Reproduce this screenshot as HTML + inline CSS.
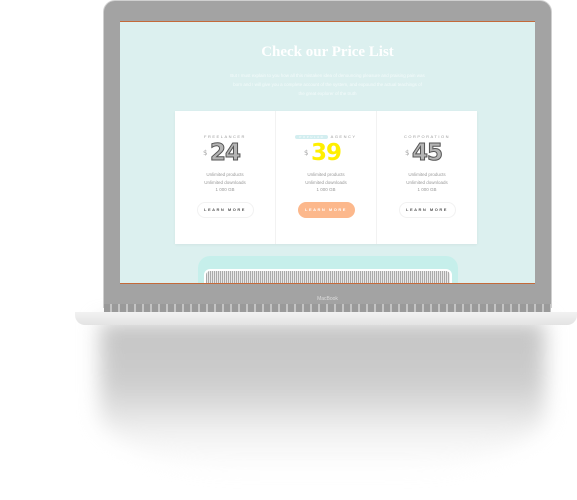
<!DOCTYPE html>
<html><head><style>
*{margin:0;padding:0;box-sizing:border-box}
body{width:577px;height:500px;background:#fff;position:relative;overflow:hidden;font-family:"Liberation Sans",sans-serif}
.abs{position:absolute}
.shadow{left:100px;top:322px;width:445px;height:150px;background:linear-gradient(#c4c4c4,#cdcdcd 40%,rgba(235,235,235,.6) 75%,rgba(255,255,255,0));filter:blur(10px);border-radius:0 0 40% 40%}
.lid{left:103px;top:0;width:449px;height:308px;background:#a3a3a3;border-radius:12px 12px 0 0;border:1px solid #d0d0d0}
.screen{left:120px;top:21px;width:415px;height:263px;background:#dcf0ef;border-top:1px solid #c46a3a;border-bottom:1px solid #c46a3a;overflow:hidden}
h1{position:absolute;left:0;width:415px;top:22px;text-align:center;color:#fff;font:bold 15px "Liberation Serif",serif}
.p{position:absolute;left:110px;width:195px;top:49px;text-align:center;color:#f4fbfb;font-size:4.5px;line-height:9px}
.card{left:55px;top:89px;width:302px;height:133px;background:#fff;display:flex;box-shadow:0 1px 3px rgba(0,0,0,.05)}
.col{flex:1;text-align:center;border-right:1px solid #f2f2f2;position:relative}
.col:last-child{border:none}
.lab{margin-top:23px;font-size:4px;letter-spacing:1.5px;color:#999;height:6px}
.pr{font:900 23px "DejaVu Sans",sans-serif;color:#b5b5b5;-webkit-text-stroke:1px #555;margin-top:1px;line-height:24px;position:relative;display:inline-block;letter-spacing:-1px}
.pr sup{position:absolute;left:-7px;top:0;font-size:7px;color:#aaa;-webkit-text-stroke:0;font-weight:400}
.f{font-size:4.5px;color:#999;line-height:7.5px;margin-top:6px}
.btn{margin:8px auto 0;width:57px;height:16px;border-radius:8px;border:1px solid #f2f2f2;font-size:4px;letter-spacing:1.5px;line-height:14px;color:#555;font-weight:bold}
.speaker{left:78px;top:234px;width:260px;height:32px;background:#c6efeb;border-radius:12px 12px 0 0}
.grill{left:84px;top:247px;width:248px;height:20px;background:repeating-linear-gradient(90deg,#aaa 0 1px,#e8e8e8 1px 2px);border-radius:6px 6px 0 0;border:2px solid #fff}
.kb{left:104px;top:304px;width:447px;height:9px;background:repeating-linear-gradient(90deg,#9a9a9a 0 6px,#c4c4c4 6px 8px)}
.base{left:75px;top:312px;width:502px;height:13px;background:linear-gradient(#f2f2f2,#e3e3e3);border-radius:0 0 10px 10px}
</style></head><body>
<div class="abs shadow"></div>
<div class="abs lid"></div>
<div class="abs screen">
<h1>Check our Price List</h1>
<div class="p">But I must explain to you how all this mistaken idea of denouncing pleasure and praising pain was born and I will give you a complete account of the system, and expound the actual teachings of the great explorer of the truth</div>
<div class="abs speaker"></div>
<div class="abs grill"></div>
<div class="abs card">
<div class="col"><div class="lab">FREELANCER</div><div class="pr"><sup>$</sup>24</div><div class="f">Unlimited products<br>Unlimited downloads<br>1 000 GB</div><div class="btn">LEARN MORE</div></div>
<div class="col"><div class="lab"><span style="background:#d3eef0;color:#fff;padding:0 4px;border-radius:2px;font-size:3px">POPULAR</span> AGENCY</div><div class="pr" style="color:#ffef00;-webkit-text-stroke:0"><sup>$</sup>39</div><div class="f">Unlimited products<br>Unlimited downloads<br>1 000 GB</div><div class="btn" style="background:#fcb88c;border-color:#fcb88c;color:#fff">LEARN MORE</div></div>
<div class="col"><div class="lab">CORPORATION</div><div class="pr"><sup>$</sup>45</div><div class="f">Unlimited products<br>Unlimited downloads<br>1 000 GB</div><div class="btn">LEARN MORE</div></div>
</div>
</div>
<div class="abs" style="left:103px;top:296px;width:449px;text-align:center;font-size:5px;color:#ddd">MacBook</div>
<div class="abs kb"></div>
<div class="abs base"></div>
</body></html>
